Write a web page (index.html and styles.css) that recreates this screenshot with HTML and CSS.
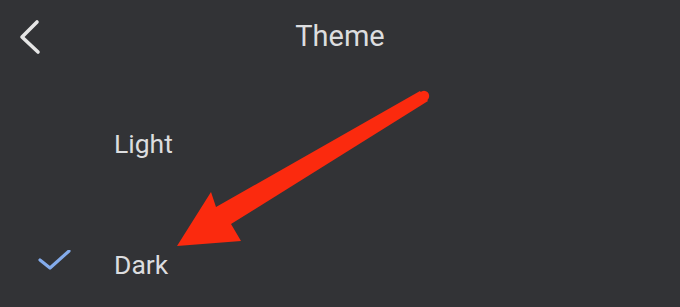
FILE: index.html
```html
<!DOCTYPE html>
<html lang="en">
<head>
<meta charset="utf-8">
<title>Theme</title>
<link rel="stylesheet" href="styles.css">
</head>
<body>
<div class="screen">
  <header class="topbar">
    <svg class="back" width="32" height="40" viewBox="0 0 32 40" aria-label="Back">
      <polyline points="25,6 10,21 26,36" fill="none" stroke="#e6e6e6" stroke-width="3.6" stroke-linecap="round" stroke-linejoin="round"/>
    </svg>
    <h1 class="title">Theme</h1>
    <span></span>
  </header>
  <ul class="options">
    <li class="option">
      <span class="check-cell"></span>
      <span class="label">Light</span>
    </li>
    <li class="option">
      <span class="check-cell">
        <svg width="34" height="24" viewBox="0 0 34 24">
          <polyline points="3,10 13,18 32,1" fill="none" stroke="#84acec" stroke-width="3.2" stroke-linecap="round" stroke-linejoin="round"/>
        </svg>
      </span>
      <span class="label">Dark</span>
    </li>
  </ul>
  <svg class="annotation" width="680" height="307" viewBox="0 0 680 307">
    <polygon fill="#fb2a0e" points="420,91 216,207 211,192 177,246 241,241 231,224 428,101"/>
    <circle cx="424" cy="96" r="5.2" fill="#fb2a0e"/>
  </svg>
</div>
</body>
</html>
```

FILE: styles.css
```css
html, body {
  margin: 0;
  padding: 0;
  background: #323336;
}

.screen {
  position: relative;
  width: 680px;
  height: 307px;
  overflow: hidden;
  background: #323336;
  font-family: Roboto, "Noto Sans", Arial, sans-serif;
  color: #dedfe1;
}

.topbar {
  display: grid;
  grid-template-columns: 60px 1fr 60px;
  align-items: start;
  height: 83px;
  box-sizing: border-box;
  padding-top: 16px;
  padding-left: 12px;
  padding-right: 12px;
}

.back {
  display: block;
}

.title {
  margin: 0;
  padding-top: 4px;
  font-size: 29px;
  font-weight: 400;
  line-height: 32px;
  text-align: center;
  color: #dcdddf;
}

.options {
  list-style: none;
  margin: 0;
  padding: 0;
}

.option {
  display: flex;
  align-items: center;
  height: 121px;
}

.check-cell {
  display: flex;
  align-items: center;
  width: 114px;
  box-sizing: border-box;
  padding-left: 37px;
  padding-bottom: 5px;
}

.check-cell svg {
  display: block;
}

.label {
  font-size: 26.5px;
  line-height: 30px;
  color: #dcdddf;
}

.annotation {
  position: absolute;
  left: 0;
  top: 0;
}
```
